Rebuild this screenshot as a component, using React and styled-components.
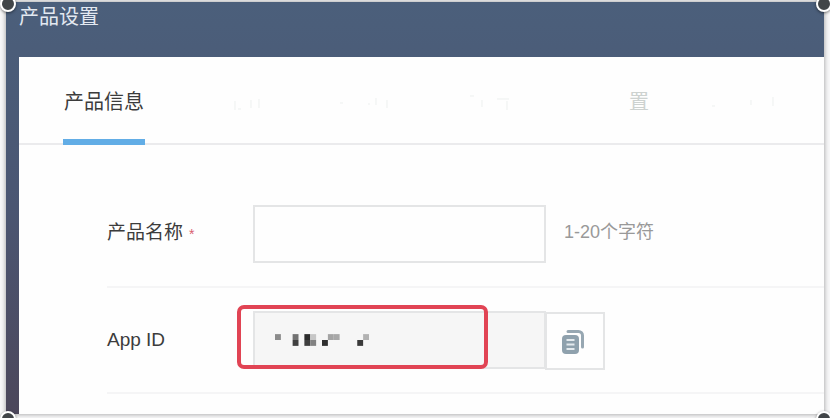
import React, { useState } from "react";
import styled, { createGlobalStyle } from "styled-components";

const GlobalStyle = createGlobalStyle`
  *, *::before, *::after {
    box-sizing: border-box;
  }
  body {
    margin: 0;
    background: #f8f8f9;
    font-family: "Liberation Sans", "Noto Sans CJK SC", sans-serif;
    color: #3c3c3c;
  }
  button, input {
    font: inherit;
    color: inherit;
  }
`;

const Frame = styled.div`
  position: relative;
  padding: 2px 6px 4px;
  overflow: hidden;
`;

const Page = styled.div`
  padding-left: 13px;
  background: linear-gradient(#4b5f7b, #4b5672 50%, #4c475b);
  box-shadow: 0 0 5px rgba(0, 0, 0, 0.4);
`;

const Title = styled.h1`
  margin: 0;
  height: 55px;
  font-size: 20px;
  font-weight: 400;
  line-height: 30px;
  color: #e3e9f1;
`;

const Panel = styled.main`
  padding-bottom: 20px;
  background: #fefefe;
`;

const Tabs = styled.nav`
  display: flex;
  gap: 44px;
  height: 88px;
  padding-left: 44px;
  border-bottom: 2px solid #ebebed;
`;

const Tab = styled.button`
  display: flex;
  align-items: center;
  justify-content: ${(p) => (p.$active ? "center" : "flex-end")};
  flex: none;
  width: 82px;
  height: 88px;
  padding: 8px 0 0;
  border: 0;
  border-bottom: 6px solid ${(p) => (p.$active ? "#62ade6" : "transparent")};
  background: none;
  font-size: 20px;
  line-height: 30px;
  color: ${(p) => (p.$active ? "#3c3c3c" : "#cdd2d0")};
  cursor: pointer;
`;

const Form = styled.form`
  padding-left: 88px;
`;

const Row = styled.div`
  display: flex;
  align-items: center;
  height: ${(p) => (p.$tall ? "143px" : "106px")};
  padding-top: ${(p) => (p.$tall ? "36px" : "0")};
  border-bottom: 2px solid #f5f5f6;
`;

const Label = styled.label`
  width: 146px;
  flex: none;
  font-size: 19px;
  line-height: 28px;
`;

const Required = styled.span`
  margin-left: 6px;
  font-size: 14px;
  color: #d8606e;
`;

const Field = styled.div`
  position: relative;
  display: flex;
  align-items: flex-end;
`;

const Input = styled.input`
  width: 293px;
  height: 58px;
  padding: 0 20px;
  border: 2px solid #e4e5e6;
  border-radius: 0;
  background: #fefefe;
  font-size: 18px;
  outline: none;
  &:read-only {
    background: #f6f6f6;
  }
`;

const Hint = styled.span`
  margin-left: 18px;
  padding-bottom: 4px;
  font-size: 18px;
  line-height: 28px;
  color: #999;
`;

const CopyButton = styled.button`
  display: flex;
  align-items: center;
  justify-content: center;
  width: 60px;
  height: 58px;
  margin: 0 0 -1px -1px;
  padding: 2px 4px 0 0;
  border: 2px solid #e4e5e6;
  background: #fefefe;
  cursor: pointer;
`;

const Mosaic = styled.svg`
  position: absolute;
  top: 23px;
  left: 22px;
`;

const Highlight = styled.div`
  position: absolute;
  top: -6px;
  left: -16px;
  width: 251px;
  height: 64px;
  border: 4px solid #e14454;
  border-radius: 7px;
  pointer-events: none;
`;

const Handle = styled.span`
  position: absolute;
  ${(p) => p.$v}: ${(p) => (p.$v === "top" ? "-4px" : "-9px")};
  ${(p) => p.$h}: ${(p) => (p.$h === "left" ? "0" : "-2px")};
  width: 16px;
  height: 16px;
  border: 2px solid #fff;
  border-radius: 50%;
  background: #414548;
  box-shadow: 0 1px 3px rgba(0, 0, 0, 0.5);
`;

// [column, row, shade]
const blocks = [
  [0, 0, "#8b8b8b"],
  [3, 0, "#727272"],
  [3, 1, "#404040"],
  [5, 0, "#2c2c2c"],
  [5, 1, "#3f3f3f"],
  [6, 0, "#c6c6c6"],
  [6, 1, "#828282"],
  [8, 1, "#2f2f2f"],
  [9, 0, "#a4a4a4"],
  [10, 0, "#a8a8a8"],
  [14, 1, "#3a3a3a"],
  [15, 0, "#b2b2b2"],
];

// faint strokes left of the tabs that are wiped out
const traces = [
  "M46 9v9M49 17h3M62 8v8M70 7v9",
  "M25 11h3M54 11v2M61 6v7M72 8v8",
  "M29 4h4M41 8v7M56 7h12M66 9v9",
];

function Trace({ d }) {
  return (
    <svg width="82" height="20" viewBox="0 0 82 20" aria-hidden="true">
      <path d={d} fill="none" stroke="#edf0ef" />
    </svg>
  );
}

function CopyIcon() {
  return (
    <svg width="22" height="24" viewBox="0 0 22 24" aria-hidden="true">
      <path
        d="M6 1.500h10.500a4 4 0 0 1 4 4V17"
        fill="none"
        stroke="#97a7b2"
        strokeWidth="3"
        strokeLinecap="round"
      />
      <rect x="0" y="5" width="17" height="19" rx="4" fill="#8fa1ad" />
      <path d="M4.500 10h8M4.500 14.500h8M4.500 19h8" stroke="#e4eaee" strokeWidth="2" />
    </svg>
  );
}

function App() {
  const [name, setName] = useState("");

  return (
    <>
      <GlobalStyle />
      <Frame>
        <Page>
          <Title>产品设置</Title>
          <Panel>
            <Tabs>
              <Tab $active>产品信息</Tab>
              {traces.map((d) => (
                <Tab key={d} disabled>
                  <Trace d={d} />
                </Tab>
              ))}
              <Tab disabled>置</Tab>
              <Tab disabled>
                <Trace d="M19 14h3M58 8v5M80 5v9" />
              </Tab>
            </Tabs>
            <Form>
              <Row $tall>
                <Label htmlFor="name">
                  产品名称<Required>*</Required>
                </Label>
                <Field>
                  <Input
                    id="name"
                    maxLength={20}
                    value={name}
                    onChange={(e) => setName(e.target.value)}
                  />
                </Field>
                <Hint>1-20个字符</Hint>
              </Row>
              <Row>
                <Label htmlFor="appid">App ID</Label>
                <Field>
                  <Input id="appid" readOnly />
                  <CopyButton type="button" aria-label="App ID">
                    <CopyIcon />
                  </CopyButton>
                  <Mosaic width="94" height="12" viewBox="0 0 16 2">
                    {blocks.map(([x, y, fill]) => (
                      <rect key={`${x}-${y}`} x={x} y={y} width="1" height="1" fill={fill} />
                    ))}
                  </Mosaic>
                  <Highlight />
                </Field>
              </Row>
            </Form>
          </Panel>
        </Page>
        <Handle $v="top" $h="left" />
        <Handle $v="top" $h="right" />
        <Handle $v="bottom" $h="left" />
        <Handle $v="bottom" $h="right" />
      </Frame>
    </>
  );
}

export default App;
